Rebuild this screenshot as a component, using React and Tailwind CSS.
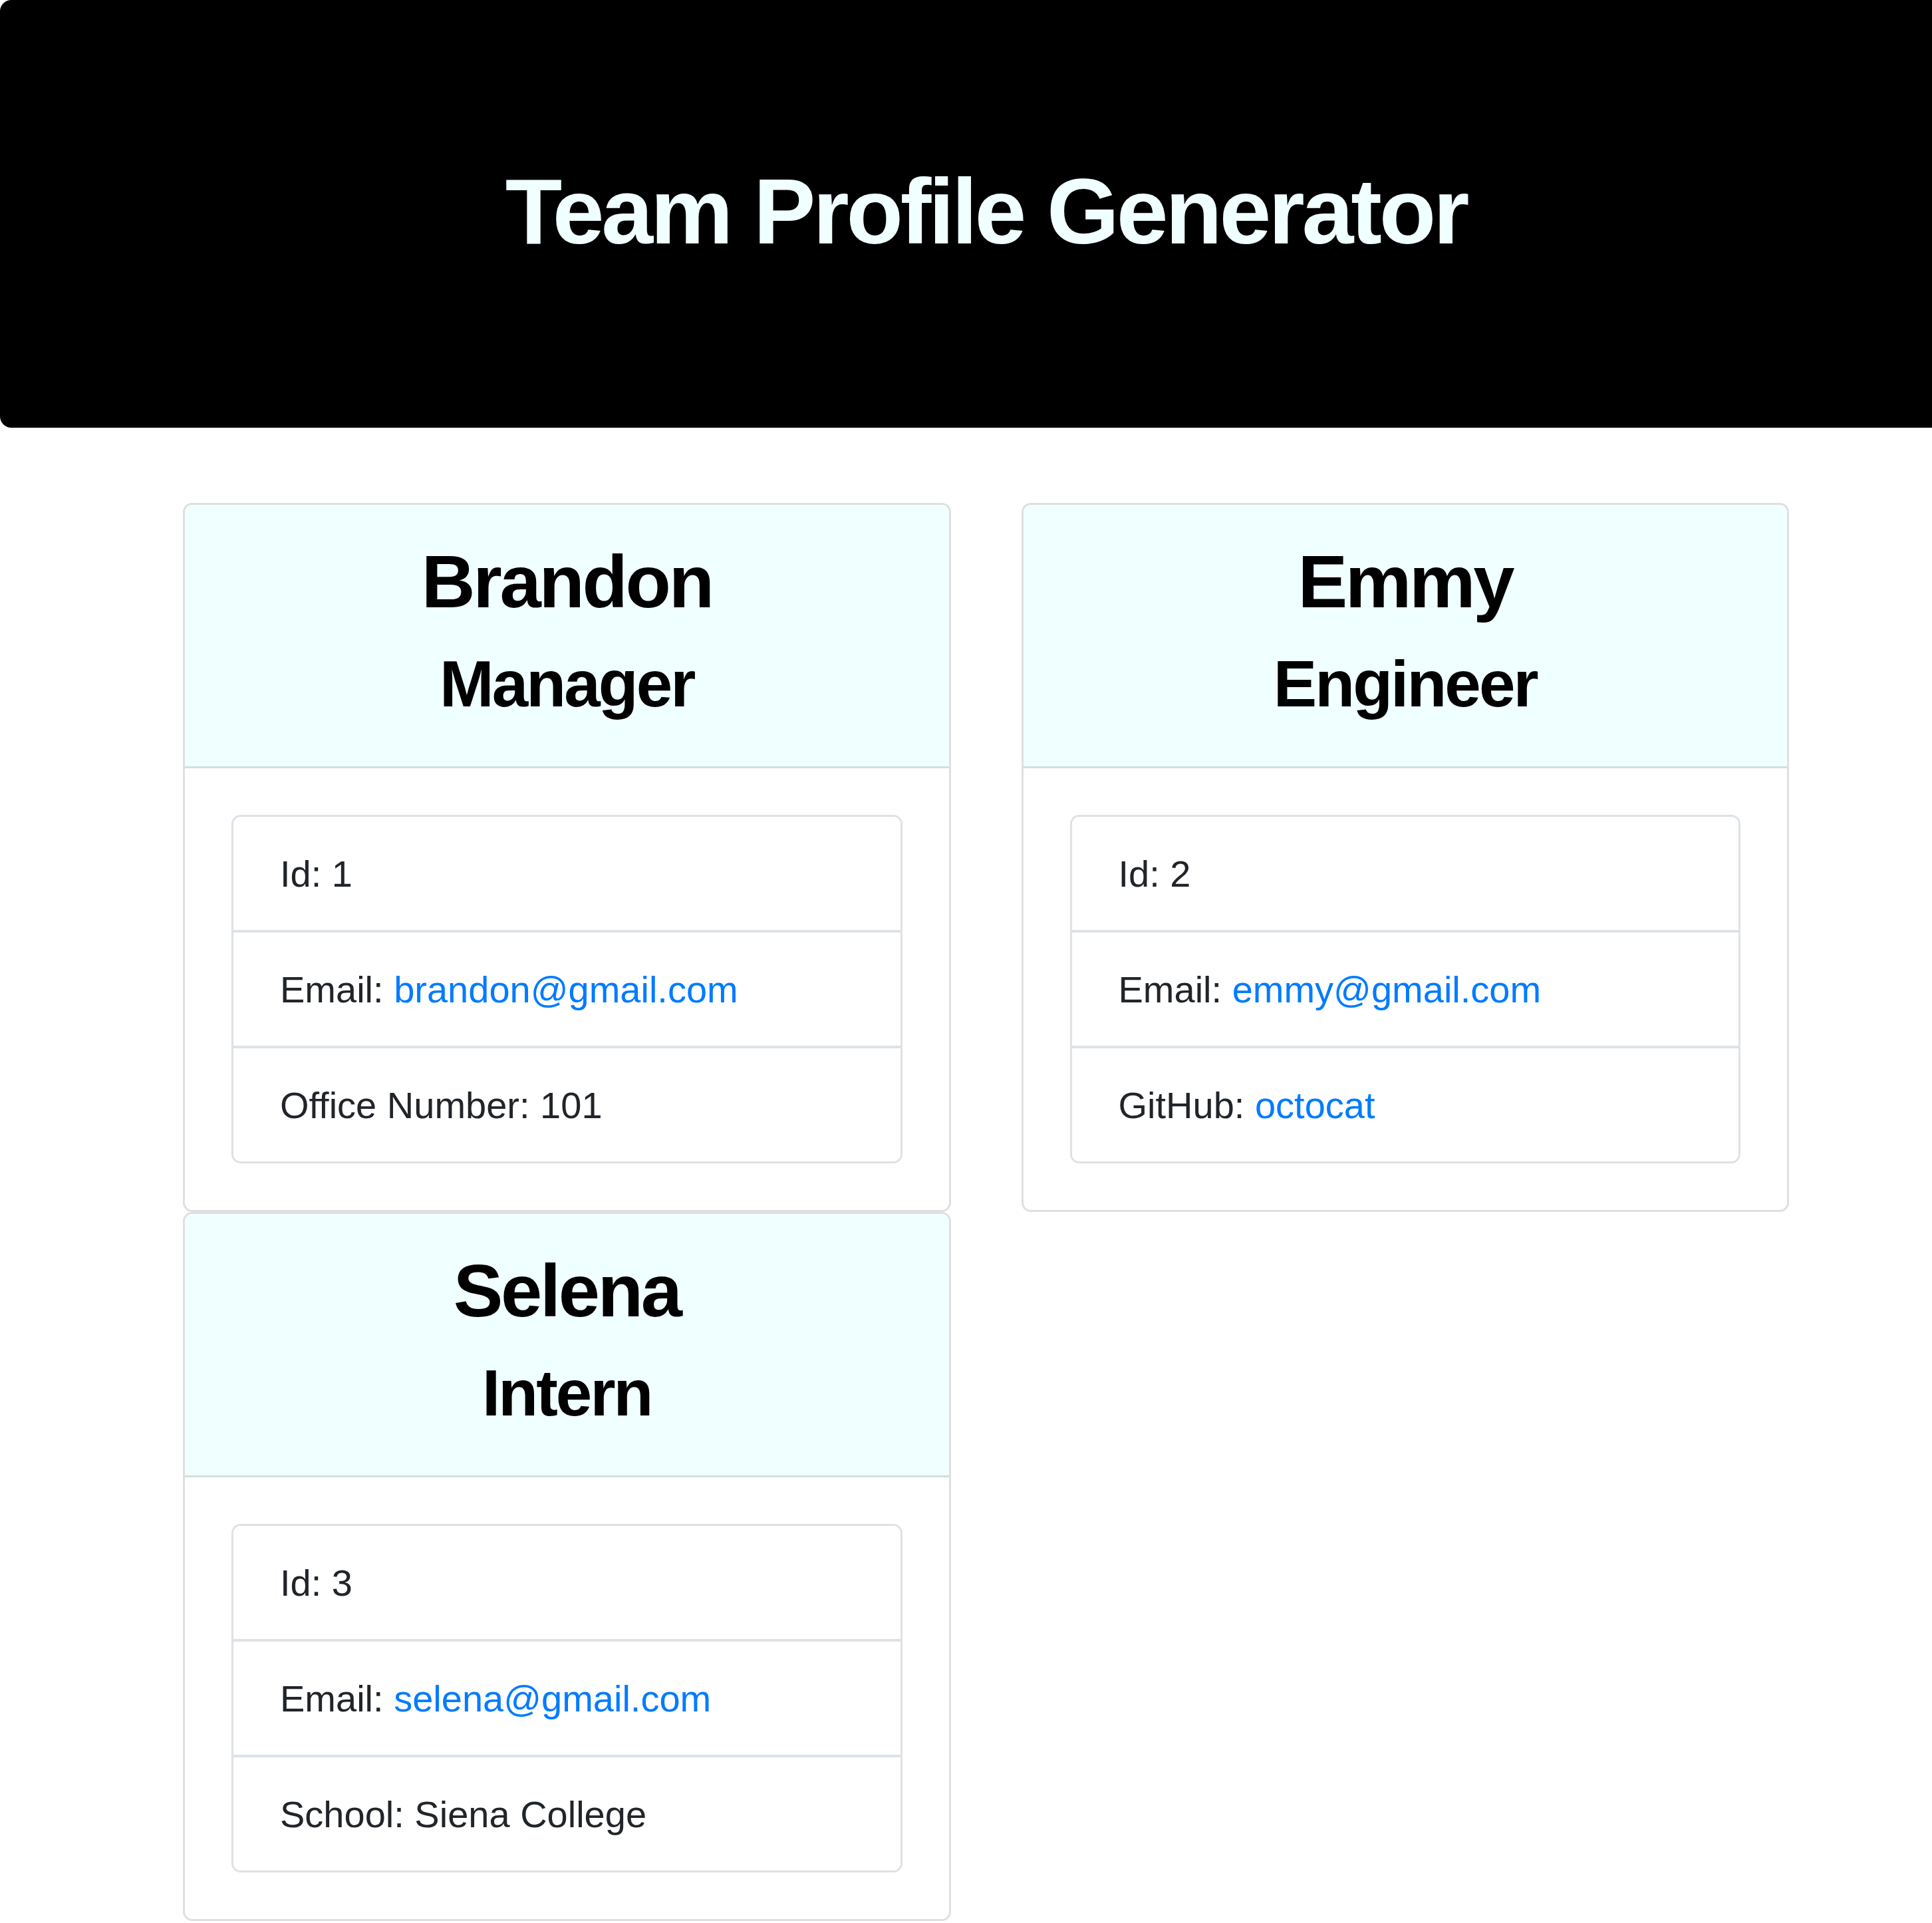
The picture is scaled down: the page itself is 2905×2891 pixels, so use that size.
const team = [
  {
    name: 'Brandon',
    role: 'Manager',
    id: 1,
    email: 'brandon@gmail.com',
    extra: { label: 'Office Number', value: '101' },
  },
  {
    name: 'Emmy',
    role: 'Engineer',
    id: 2,
    email: 'emmy@gmail.com',
    extra: { label: 'GitHub', value: 'octocat', link: true },
  },
  {
    name: 'Selena',
    role: 'Intern',
    id: 3,
    email: 'selena@gmail.com',
    extra: { label: 'School', value: 'Siena College' },
  },
];

function ListItem({ first, last, children }) {
  return (
    <li
      className={`px-[70px] pt-[44px] pb-[42px] leading-[84px] bg-white ${first ? '' : 'border-t-[4px] border-[#dee2e6]'} ${
        first ? 'rounded-t-[11px]' : ''
      } ${last ? 'rounded-b-[11px]' : ''}`}
    >
      {children}
    </li>
  );
}

function EmployeeCard({ member }) {
  return (
    <div className="border-[3px] border-[#dfdfdf] rounded-[14px] bg-white overflow-hidden">
      {/* card header */}
      <div className="bg-[#f0ffff] border-b-[3px] border-[#d2dfdf] pt-[49px] pb-[64px] text-center text-black">
        <h2 className="text-[112px] leading-[1.2] font-bold tracking-[-0.03em] mb-[28px]">{member.name}</h2>
        <h3 className="text-[98px] leading-[1.2] font-bold tracking-[-0.03em]">{member.role}</h3>
      </div>

      {/* card body */}
      <div className="p-[70px]">
        <ul className="border-[3px] border-[#dee2e6] rounded-[14px] text-[56px] text-[#212529]">
          <ListItem first>Id: {member.id}</ListItem>
          <ListItem>
            Email: <a className="text-[#007bff]">{member.email}</a>
          </ListItem>
          <ListItem last>
            {member.extra.label}:{' '}
            {member.extra.link ? (
              <a className="text-[#007bff]">{member.extra.value}</a>
            ) : (
              member.extra.value
            )}
          </ListItem>
        </ul>
      </div>
    </div>
  );
}

export default function App() {
  return (
    <div
      className="w-[2905px] min-h-[2891px] bg-white overflow-hidden"
      style={{ fontFamily: '"Liberation Sans", Arial, sans-serif' }}
    >
      {/* jumbotron */}
      <header className="h-[643px] bg-black rounded-l-[17px] pt-[234px] pl-[60px] text-center">
        <h1 className="text-[140px] leading-[1.2] font-bold tracking-[-0.03em] text-[#f0ffff]">
          Team Profile Generator
        </h1>
      </header>

      {/* cards */}
      <main className="ml-[275px] mt-[113px] w-[2415px] grid grid-cols-2 gap-x-[106px]">
        {team.map((m) => (
          <EmployeeCard key={m.id} member={m} />
        ))}
      </main>
    </div>
  );
}
